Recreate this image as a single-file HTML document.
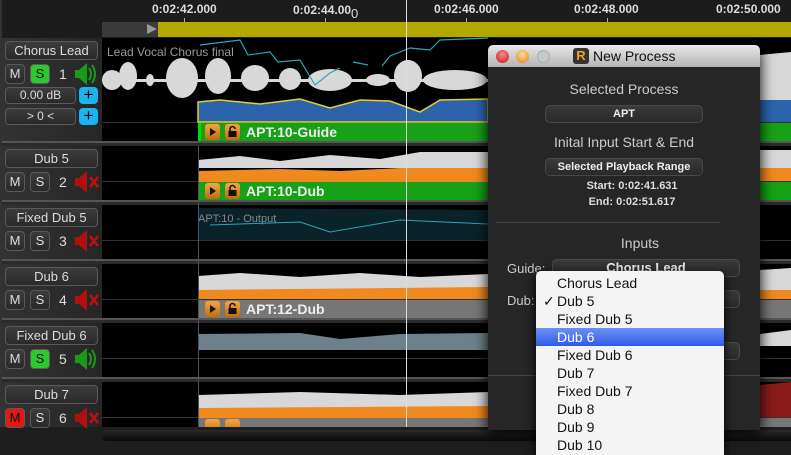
<!DOCTYPE html>
<html><head><meta charset="utf-8"><style>
*{margin:0;padding:0;box-sizing:border-box}
body{width:791px;height:455px;background:#111;position:relative;overflow:hidden;font-family:"Liberation Sans",sans-serif}
.a{position:absolute}
.btn{position:absolute;background:linear-gradient(#3c3c3c,#2a2a2a);border:1px solid #5a5a5a;border-radius:4px;color:#ddd;font-size:13px;text-align:center}
.ms{width:20px;height:20px;line-height:18px;font-size:13px}
.num{position:absolute;color:#ddd;font-size:14px}
.lane{position:absolute;left:102px;width:689px;background:#000}
.clip{position:absolute;left:198px;right:0;height:18px;color:#eee;font-weight:bold;font-size:14px;line-height:18px;padding-left:48px}
.ic{position:absolute;top:1px;width:15px;height:16px;background:linear-gradient(#f4a640,#c06a10);border-radius:3px}
.ic svg{position:absolute;left:0;top:0}
.item{height:18px;line-height:18px;padding-left:21px;font-size:14px;color:#111}
.pop{position:absolute;left:545px;width:158px;height:18px;border-radius:5px;background:linear-gradient(#3a3a3a,#2a2a2a);border:1px solid #4a4a4a;color:#eee;font-size:11px;font-weight:bold;text-align:center;line-height:16px}
.dl{color:#ccc;font-size:13px;text-align:center;position:absolute;left:488px;width:272px}
</style></head><body>
<div class="a" style="left:0;top:0;width:791px;height:38px;background:#1c1c1c"></div>
<div class="a" style="left:0;top:0;width:2px;height:455px;background:#333"></div>
<div class="a" style="left:102px;top:22px;width:56px;height:15px;background:#3a3a3a"></div>
<div class="a" style="left:147px;top:24px;width:0;height:0;border-left:10px solid #999;border-top:5px solid transparent;border-bottom:5px solid transparent"></div>
<div class="a" style="left:158px;top:22px;width:633px;height:15px;background:#b3a700"></div>
<div class="a" style="color:#ddd;font-size:12px;font-weight:bold;top:2px;left:152px">0:02:42.000</div>
<div class="a" style="color:#ddd;font-size:12px;font-weight:bold;top:2px;left:293px">0:02:44.00<span style="font-weight:normal;font-size:13px;position:relative;top:4px">0</span></div>
<div class="a" style="color:#ddd;font-size:12px;font-weight:bold;top:2px;left:434px">0:02:46.000</div>
<div class="a" style="color:#ddd;font-size:12px;font-weight:bold;top:2px;left:574px">0:02:48.000</div>
<div class="a" style="color:#ddd;font-size:12px;font-weight:bold;top:2px;left:716px">0:02:50.000</div>
<div class="a" style="left:184px;top:18px;width:1px;height:4px;background:#aaa"></div>
<div class="a" style="left:325px;top:18px;width:1px;height:4px;background:#aaa"></div>
<div class="a" style="left:466px;top:18px;width:1px;height:4px;background:#aaa"></div>
<div class="a" style="left:607px;top:18px;width:1px;height:4px;background:#aaa"></div>

<div class="a" style="left:2px;top:38px;width:100px;height:392px;background:linear-gradient(90deg,#333,#262626)"></div>
<div class="a" style="left:2px;top:141px;width:789px;height:5px;background:#2b2b2b;border-top:2px solid #555"></div>
<div class="a" style="left:2px;top:200px;width:789px;height:5px;background:#2b2b2b;border-top:2px solid #555"></div>
<div class="a" style="left:2px;top:259px;width:789px;height:5px;background:#2b2b2b;border-top:2px solid #555"></div>
<div class="a" style="left:2px;top:318px;width:789px;height:5px;background:#2b2b2b;border-top:2px solid #555"></div>
<div class="a" style="left:2px;top:377px;width:789px;height:5px;background:#2b2b2b;border-top:2px solid #555"></div>

<div class="lane" style="top:38px;height:103px"></div>
<div class="lane" style="top:146px;height:54px"></div>
<div class="lane" style="top:205px;height:54px"></div>
<div class="lane" style="top:264px;height:54px"></div>
<div class="lane" style="top:323px;height:54px"></div>
<div class="lane" style="top:382px;height:45px"></div>
<div class="a" style="left:102px;top:122px;width:689px;height:1px;background:#333"></div>
<div class="a" style="left:102px;top:181px;width:689px;height:1px;background:#333"></div>
<div class="a" style="left:102px;top:240px;width:689px;height:1px;background:#333"></div>
<div class="a" style="left:102px;top:299px;width:689px;height:1px;background:#333"></div>
<div class="a" style="left:102px;top:358px;width:689px;height:1px;background:#333"></div>
<div class="a" style="left:102px;top:417px;width:689px;height:1px;background:#333"></div>

<svg class="a" style="left:0;top:0" width="791" height="455">
<g fill="#d8d8d8">
<ellipse cx="112" cy="80" rx="10" ry="10"/><ellipse cx="128" cy="76" rx="9" ry="14"/><ellipse cx="150" cy="80" rx="4" ry="6"/>
<ellipse cx="182" cy="78" rx="16" ry="20"/><ellipse cx="218" cy="76" rx="13" ry="18"/><ellipse cx="255" cy="78" rx="14" ry="13"/>
<ellipse cx="290" cy="79" rx="11" ry="11"/><ellipse cx="330" cy="80" rx="22" ry="11"/><ellipse cx="378" cy="80" rx="12" ry="6"/>
<ellipse cx="408" cy="76" rx="14" ry="16"/><ellipse cx="455" cy="80" rx="32" ry="10"/>
<rect x="102" y="79" width="388" height="3"/></g>
<path d="M198 102 L220 100 L260 104 L300 99 L330 108 L360 100 L390 101 L420 112 L440 100 L488 99 L488 122 L198 122Z" fill="#2d63ad" stroke="#e6d21e" stroke-width="1.5"/>
<path d="M200 45 L240 40 L248 55 L270 52 L278 62 L300 60 L315 85 L330 73 L340 68 M353 62 L368 65 M382 66 L390 56 L400 52 L410 48 L430 50 L440 40 L488 38" fill="none" stroke="#2aa8b8" stroke-width="1.2"/>
<path d="M198 160 L240 156 L280 161 L330 155 L380 159 L420 152 L488 152 L488 168 L198 168Z" fill="#d8d8d8"/>
<path d="M198 171 L280 169 L340 171 L400 168 L488 168 L488 182 L198 182Z" fill="#f08a1e"/>
<path d="M198 208 L488 210 L488 240 L198 240Z" fill="#0c2b35" opacity=".8"/>
<path d="M210 225 L300 222 L330 232 L400 220 L488 224" fill="none" stroke="#2aa8b8"/>
<path d="M198 276 L240 273 L300 277 L360 273 L420 277 L488 274 L488 290 L198 290Z" fill="#d8d8d8"/>
<path d="M198 290 L488 287 L488 299 L198 299Z" fill="#f08a1e"/>
<path d="M198 334 L300 333 L340 339 L400 334 L488 333 L488 350 L198 350Z" fill="#9ab8c4" opacity=".7"/>
<path d="M198 395 L300 392 L400 395 L488 392 L488 410 L198 410Z" fill="#d8d8d8"/>
<path d="M198 408 L488 406 L488 418 L198 418Z" fill="#f08a1e"/>
<path d="M760 55 L791 52 L791 100 L760 100Z M760 150 L791 150 L791 168 L760 168Z M760 270 L791 268 L791 290 L760 290Z M760 334 L791 330 L791 346 L760 346Z" fill="#d8d8d8"/>
<path d="M760 100 L791 100 L791 122 L760 122Z" fill="#2d63ad"/>
<path d="M760 168 L791 168 L791 181 L760 181Z M760 290 L791 290 L791 299 L760 299Z" fill="#f08a1e"/>
<path d="M760 385 L791 382 L791 417 L760 417Z" fill="#8a1a1a"/>
</svg>
<div class="a" style="left:107px;top:45px;color:#999;font-size:12px">Lead Vocal Chorus final</div>
<div class="a" style="left:198px;top:213px;color:#888;font-size:11px">APT:10 - Output</div>

<div class="clip" style="top:123px;background:#17a117;box-shadow:inset 3px 0 #0d0"><div class="ic" style="left:7px"><svg width="15" height="16"><path d="M5 4 L11 8 L5 12Z" fill="#111"/></svg></div><div class="ic" style="left:27px"><svg width="15" height="16"><path d="M5 7 V5 a2.5 2.5 0 0 1 5 0" stroke="#111" stroke-width="1.5" fill="none"/><rect x="3.5" y="7" width="8" height="6" fill="#111"/></svg></div>APT:10-Guide</div>
<div class="clip" style="top:182px;background:#17a117"><div class="ic" style="left:7px"><svg width="15" height="16"><path d="M5 4 L11 8 L5 12Z" fill="#111"/></svg></div><div class="ic" style="left:27px"><svg width="15" height="16"><path d="M5 7 V5 a2.5 2.5 0 0 1 5 0" stroke="#111" stroke-width="1.5" fill="none"/><rect x="3.5" y="7" width="8" height="6" fill="#111"/></svg></div>APT:10-Dub</div>
<div class="clip" style="top:300px;background:#777"><div class="ic" style="left:7px"><svg width="15" height="16"><path d="M5 4 L11 8 L5 12Z" fill="#111"/></svg></div><div class="ic" style="left:27px"><svg width="15" height="16"><path d="M5 7 V5 a2.5 2.5 0 0 1 5 0" stroke="#111" stroke-width="1.5" fill="none"/><rect x="3.5" y="7" width="8" height="6" fill="#111"/></svg></div>APT:12-Dub</div>
<div class="clip" style="top:418px;height:9px;background:#777;overflow:hidden"><div class="ic" style="left:7px"></div><div class="ic" style="left:27px"></div></div>
<div class="a" style="left:198px;top:146px;width:1px;height:281px;background:#456"></div>
<div class="a" style="left:406px;top:0;width:1px;height:430px;background:#ddd"></div>

<div class="a" style="left:0;top:427px;width:791px;height:28px;background:#1e1e1e"></div>
<div class="a" style="left:102px;top:430px;width:689px;height:11px;background:linear-gradient(#2a2a2a,#0a0a0a);border-radius:5px 0 0 5px"></div>

<div class="btn" style="left:5px;top:41px;width:93px;height:19px;line-height:17px">Chorus Lead</div>
<div class="btn ms" style="left:5px;top:64px">M</div>
<div class="btn ms" style="left:30px;top:64px;background:#2ec82e;color:#111">S</div>
<div class="num" style="left:59px;top:66px">1</div>
<div class="btn" style="left:5px;top:87px;width:71px;height:17px;line-height:15px;font-size:12px">0.00 dB</div>
<div class="btn" style="left:79px;top:87px;width:19px;height:17px;background:#1ab4f0;border-color:#1ab4f0;color:#000;line-height:13px;font-size:17px">+</div>
<div class="btn" style="left:5px;top:108px;width:71px;height:17px;line-height:15px;font-size:12px">&gt; 0 &lt;</div>
<div class="btn" style="left:79px;top:108px;width:19px;height:17px;background:#1ab4f0;border-color:#1ab4f0;color:#000;line-height:13px;font-size:17px">+</div>

<div class="btn" style="left:5px;top:149px;width:93px;height:19px;line-height:17px">Dub 5</div>
<div class="btn ms" style="left:5px;top:172px">M</div><div class="btn ms" style="left:30px;top:172px">S</div><div class="num" style="left:59px;top:174px">2</div>
<div class="btn" style="left:5px;top:208px;width:93px;height:19px;line-height:17px">Fixed Dub 5</div>
<div class="btn ms" style="left:5px;top:231px">M</div><div class="btn ms" style="left:30px;top:231px">S</div><div class="num" style="left:59px;top:233px">3</div>
<div class="btn" style="left:5px;top:267px;width:93px;height:19px;line-height:17px">Dub 6</div>
<div class="btn ms" style="left:5px;top:290px">M</div><div class="btn ms" style="left:30px;top:290px">S</div><div class="num" style="left:59px;top:292px">4</div>
<div class="btn" style="left:5px;top:326px;width:93px;height:19px;line-height:17px">Fixed Dub 6</div>
<div class="btn ms" style="left:5px;top:349px">M</div><div class="btn ms" style="left:30px;top:349px;background:#2ec82e;color:#111">S</div><div class="num" style="left:59px;top:351px">5</div>
<div class="btn" style="left:5px;top:385px;width:93px;height:19px;line-height:17px">Dub 7</div>
<div class="btn ms" style="left:5px;top:408px;background:#e01a10;color:#111">M</div><div class="btn ms" style="left:30px;top:408px">S</div><div class="num" style="left:59px;top:410px">6</div>

<svg class="a" style="left:74px;top:0" width="28" height="430">
<g fill="#1a9a1a"><path d="M1 70 h4 v8 h-4z M5 70 l8 -7 v22 l-8 -7z"/><path d="M15 68 q4 6 0 12 M18 65 q6 9 0 18" stroke="#1a9a1a" stroke-width="2" fill="none"/></g>
<g fill="#1a9a1a" transform="translate(0,285)"><path d="M1 70 h4 v8 h-4z M5 70 l8 -7 v22 l-8 -7z"/><path d="M15 68 q4 6 0 12 M18 65 q6 9 0 18" stroke="#1a9a1a" stroke-width="2" fill="none"/></g>
<g id="mu"><path d="M1 178 h4 v8 h-4z M5 178 l8 -7 v22 l-8 -7z" fill="#b01010"/><path d="M16 177 l8 10 M24 177 l-8 10" stroke="#c01010" stroke-width="2.5"/></g>
<use href="#mu" y="59"/><use href="#mu" y="118"/><use href="#mu" y="236"/>
</svg>

<div class="a" style="left:488px;top:45px;width:272px;height:385px;background:#262626;border-radius:5px 5px 0 0;box-shadow:0 4px 14px #000"></div>
<div class="a" style="left:488px;top:45px;width:272px;height:22px;background:linear-gradient(#e8e8e8,#b4b4b4);border-radius:5px 5px 0 0"></div>
<div class="a" style="left:496px;top:50px;width:13px;height:13px;border-radius:50%;background:radial-gradient(circle at 50% 35%,#f88,#c01818)"></div>
<div class="a" style="left:516px;top:50px;width:13px;height:13px;border-radius:50%;background:radial-gradient(circle at 50% 35%,#fd9,#e08010)"></div>
<div class="a" style="left:537px;top:50px;width:13px;height:13px;border-radius:50%;background:#c8c8c8;border:1px solid #aaa"></div>
<div class="a" style="left:573px;top:48px;width:16px;height:16px;background:#333;border-radius:3px;color:#f0a020;font-weight:bold;font-size:13px;text-align:center;line-height:16px">R</div>
<div class="a" style="left:593px;top:48px;font-size:14px;color:#111">New Process</div>

<div class="dl" style="top:81px;left:488px;font-size:14px">Selected Process</div>
<div class="pop" style="top:105px">APT</div>
<div class="dl" style="top:134px;font-size:14px">Inital Input Start &amp; End</div>
<div class="pop" style="top:158px">Selected Playback Range</div>
<div class="dl" style="top:180px;font-size:11px;font-weight:bold;color:#ddd;left:496px">Start: 0:02:41.631</div>
<div class="dl" style="top:196px;font-size:11px;font-weight:bold;color:#ddd;left:496px">End: 0:02:51.617</div>
<div class="a" style="left:496px;top:222px;width:224px;height:1px;background:#444"></div>
<div class="dl" style="top:235px;font-size:14px;left:504px">Inputs</div>
<div class="a" style="left:507px;top:261px;color:#ccc;font-size:13px">Guide:</div>
<div class="pop" style="left:552px;top:259px;width:188px;font-size:13px;line-height:16px">Chorus Lead</div>
<div class="a" style="left:507px;top:293px;color:#ccc;font-size:13px">Dub:</div>
<div class="pop" style="left:552px;top:290px;width:188px"></div>
<div class="pop" style="left:552px;top:342px;width:188px"></div>
<div class="a" style="left:488px;top:375px;width:272px;height:1px;background:#444"></div>

<div class="a" style="left:536px;top:271px;width:188px;height:184px;background:#f4f4f4;border-radius:5px 5px 0 0;padding-top:3px;box-shadow:0 3px 10px #000">
<div class="item">Chorus Lead</div>
<div class="item" style="position:relative"><span style="position:absolute;left:7px">✓</span>Dub 5</div>
<div class="item">Fixed Dub 5</div>
<div class="item" style="background:linear-gradient(#6d8ff7,#2f5ce8);color:#fff">Dub 6</div>
<div class="item">Fixed Dub 6</div>
<div class="item">Dub 7</div>
<div class="item">Fixed Dub 7</div>
<div class="item">Dub 8</div>
<div class="item">Dub 9</div>
<div class="item">Dub 10</div>
</div>
</body></html>
